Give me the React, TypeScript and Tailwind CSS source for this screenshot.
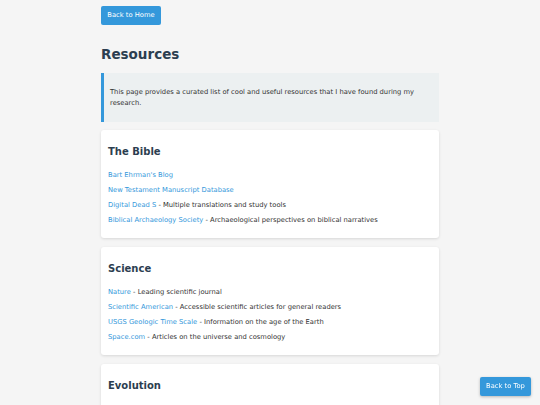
import { type JSX } from "react";

type Resource = { name: string; note?: string };
type Section = { title: string; items: Resource[] };

const sections: Section[] = [
  {
    title: "The Bible",
    items: [
      { name: "Bart Ehrman's Blog" },
      { name: "New Testament Manuscript Database" },
      { name: "Digital Dead S", note: "Multiple translations and study tools" },
      {
        name: "Biblical Archaeology Society",
        note: "Archaeological perspectives on biblical narratives",
      },
    ],
  },
  {
    title: "Science",
    items: [
      { name: "Nature", note: "Leading scientific journal" },
      {
        name: "Scientific American",
        note: "Accessible scientific articles for general readers",
      },
      {
        name: "USGS Geologic Time Scale",
        note: "Information on the age of the Earth",
      },
      { name: "Space.com", note: "Articles on the universe and cosmology" },
    ],
  },
  {
    title: "Evolution",
    items: [
      { name: "Talk Origins", note: "Evolution and creationism archive" },
      { name: "Understanding Evolution", note: "Resource from UC Berkeley" },
      { name: "Smithsonian Human Origins" },
    ],
  },
];

export default function App(): JSX.Element {
  return (
    <div className="min-h-screen bg-[#f5f5f5] font-['DejaVu_Sans',Verdana,sans-serif] text-[#333]">
      <div className="w-[338px] mx-auto pt-[6px] pb-6">
        <button className="block w-[60px] h-[19px] rounded-[2px] bg-[#3498db] text-white text-[6.75px] leading-none">
          Back to Home
        </button>

        <h1 className="mt-[21px] text-[13.5px] leading-[16px] font-bold text-[#2c3e50]">
          Resources
        </h1>

        {/* intro note */}
        <div className="mt-[11px] border-l-[3px] border-[#3498db] bg-[#ecf0f1] pl-[6px] pr-[7px] py-[13.5px] text-[6.75px] leading-[11px] text-[#333]">
          This page provides a curated list of cool and useful resources that I
          have found during my research.
        </div>

        <div className="mt-[8px] flex flex-col gap-[9px]">
          {sections.map((section) => (
            <div
              key={section.title}
              className="bg-white rounded-[3px] shadow-[0_1px_3px_rgba(0,0,0,0.12)] px-[7px] pt-[14px] pb-[12px]"
            >
              <h2 className="text-[10px] leading-[16px] font-bold text-[#2c3e50]">
                {section.title}
              </h2>
              <ul className="mt-[10px] flex flex-col gap-[4px] text-[6.75px] leading-[11px]">
                {section.items.map((item) => (
                  <li key={item.name}>
                    <a href="#" className="text-[#3498db]">
                      {item.name}
                    </a>
                    {item.note && <span> - {item.note}</span>}
                  </li>
                ))}
              </ul>
            </div>
          ))}
        </div>
      </div>

      <button className="fixed right-[9px] bottom-[9px] w-[51px] h-[19px] rounded-[2px] bg-[#3498db] text-white text-[6.75px] leading-none shadow-[0_1px_3px_rgba(0,0,0,0.25)]">
        Back to Top
      </button>
    </div>
  );
}
